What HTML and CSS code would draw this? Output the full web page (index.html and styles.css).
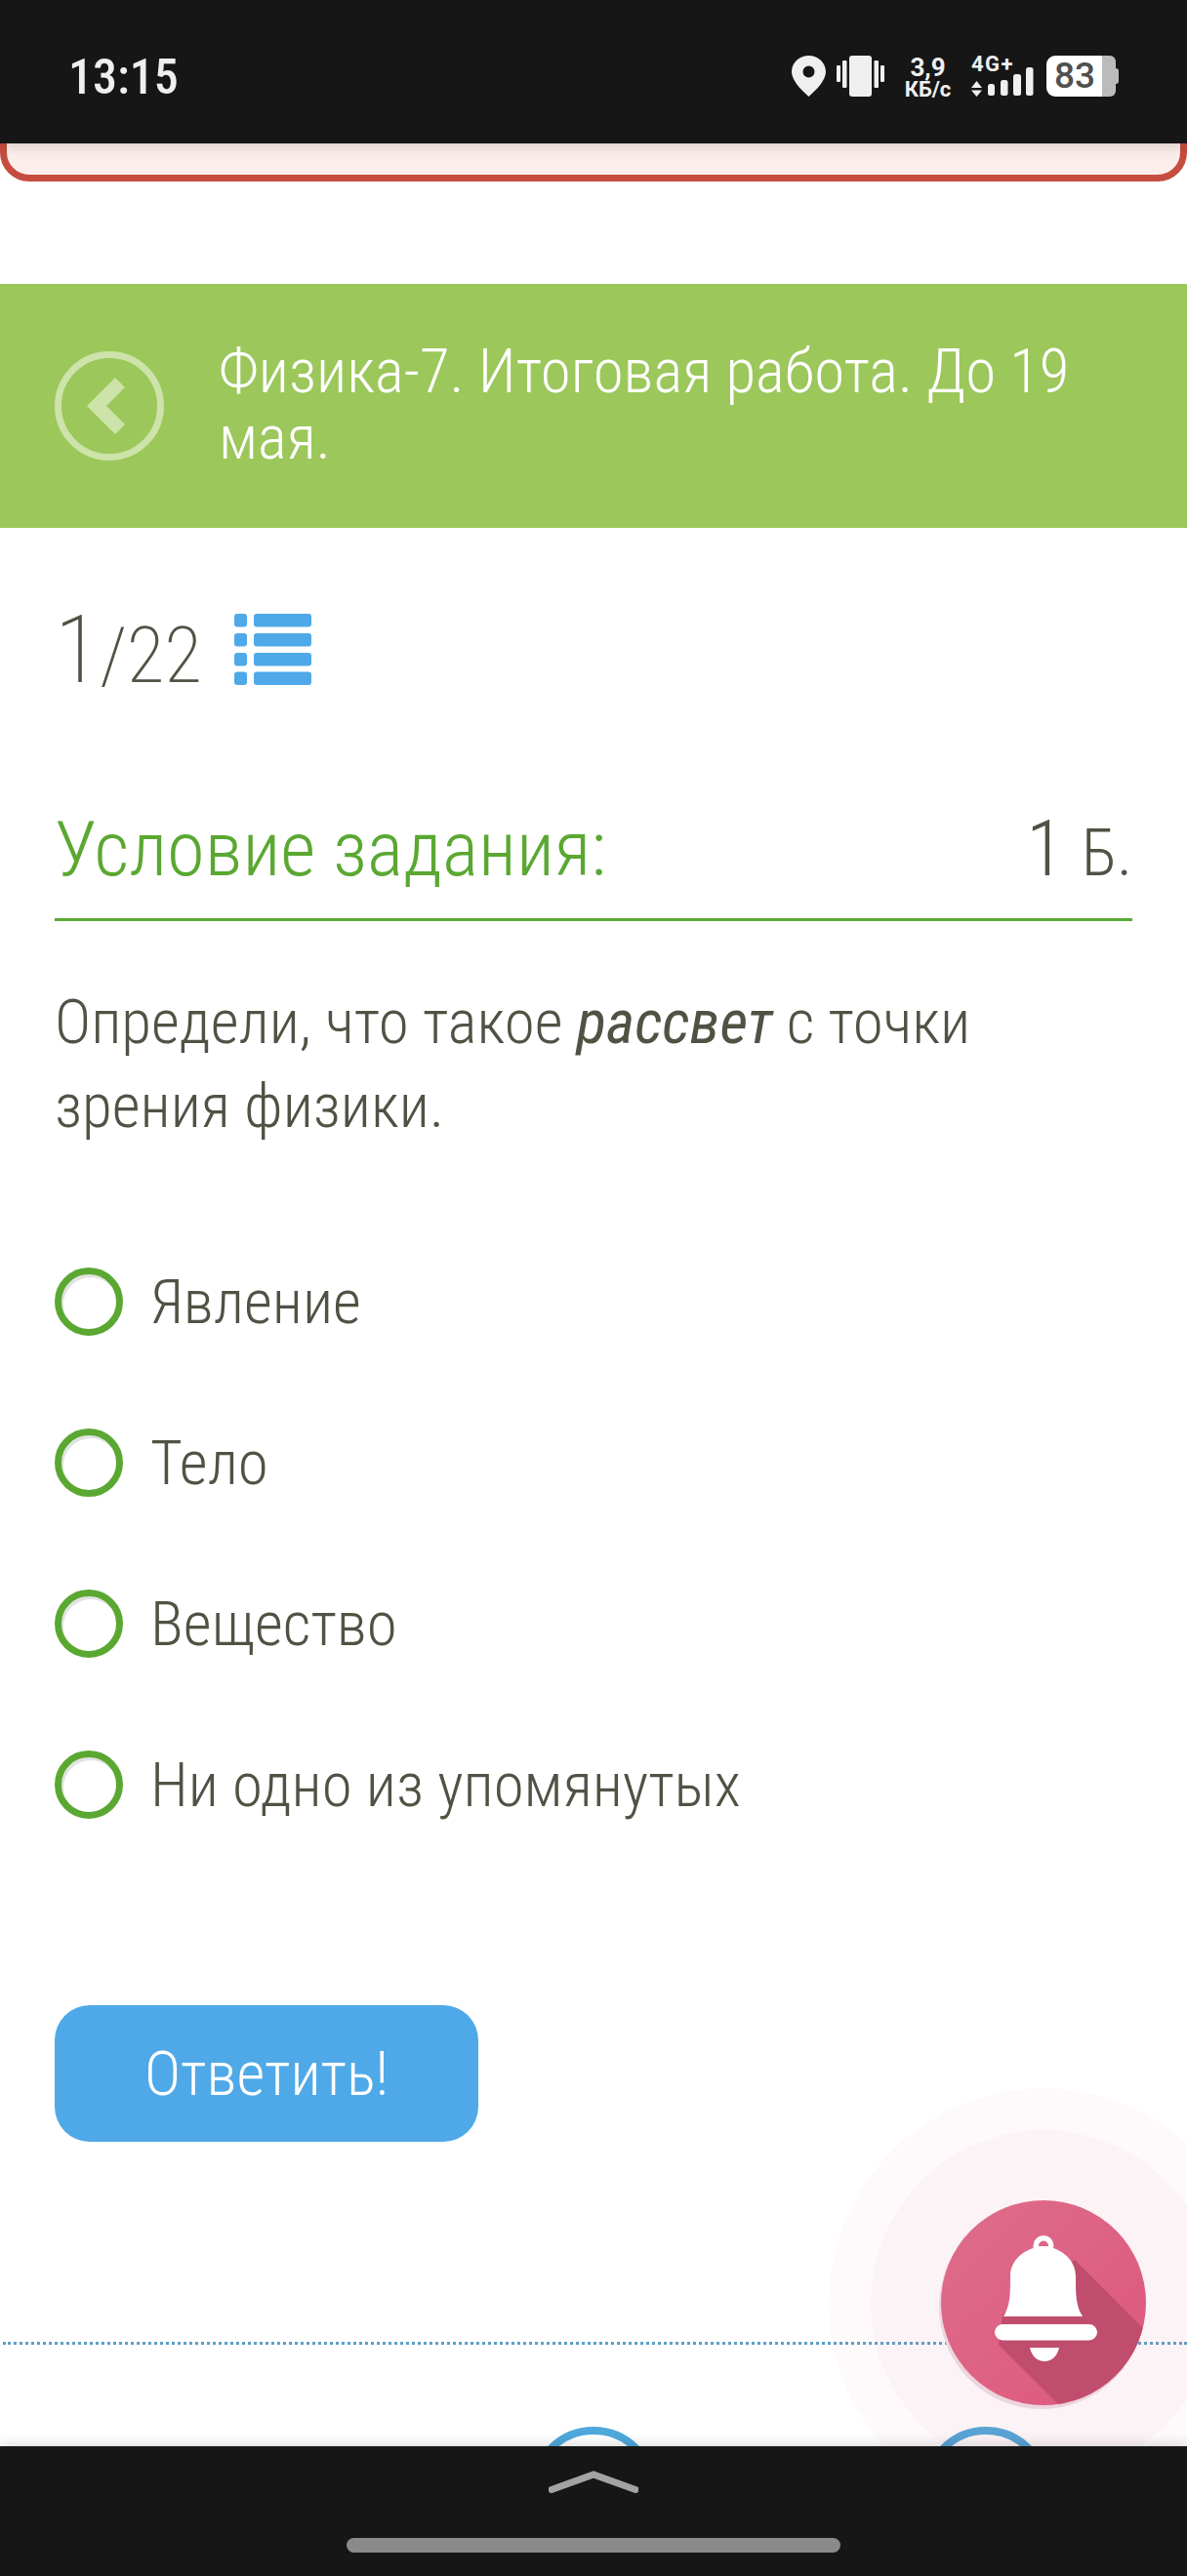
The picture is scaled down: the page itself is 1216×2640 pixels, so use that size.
FILE: index.html
```html
<!DOCTYPE html>
<html lang="ru">
<head>
<meta charset="utf-8">
<title>Физика-7</title>
<link rel="stylesheet" href="styles.css">
</head>
<body>
<div class="screen">
  <main class="page">
    <div class="alert"></div>
    <header class="banner">
      <div class="back">
        <svg class="back-chevron" viewBox="0 0 39 58"><path d="M29 0 L39 10 L20 29 L39 48 L29 58 L0 29 Z" fill="#cde3a9"/></svg>
      </div>
      <h1 class="banner-title">Физика-7. Итоговая работа. До 19 мая.</h1>
    </header>
    <div class="counter">
      <span class="counter-num"><span class="counter-first">1</span>/22</span>
      <svg class="list-icon" viewBox="0 0 79 73">
        <g fill="#4fa9e8">
          <rect x="0" y="0" width="13" height="13.5" rx="3"/><rect x="20" y="0" width="59" height="13.5" rx="3"/>
          <rect x="0" y="20" width="13" height="13.5" rx="3"/><rect x="20" y="20" width="59" height="13.5" rx="3"/>
          <rect x="0" y="40" width="13" height="13.5" rx="3"/><rect x="20" y="40" width="59" height="13.5" rx="3"/>
          <rect x="0" y="59.5" width="13" height="13.5" rx="3"/><rect x="20" y="59.5" width="59" height="13.5" rx="3"/>
        </g>
      </svg>
    </div>
    <div class="task-head">
      <h2 class="task-title">Условие задания:</h2>
      <div class="task-points">1 <small>Б.</small></div>
    </div>
    <p class="question">Определи, что такое <em>рассвет</em> с точки зрения физики.</p>
    <ul class="options">
      <li class="option"><span class="radio"></span>Явление</li>
      <li class="option"><span class="radio"></span>Тело</li>
      <li class="option"><span class="radio"></span>Вещество</li>
      <li class="option"><span class="radio"></span>Ни одно из упомянутых</li>
    </ul>
    <button class="submit">Ответить!</button>
    <div class="dotted"></div>
    <div class="next-row">
      <span class="ring"></span>
      <span class="ring"></span>
    </div>
  </main>

  <div class="status">
    <span class="time">13:15</span>
    <div class="status-icons">
      <svg class="pin" viewBox="0 0 35 42"><path fill-rule="evenodd" fill="#efefef" d="M17.5 0C27 0 35 7.300 35 16.500C35 25 26 34.500 17.500 42C9 34.500 0 25 0 16.500C0 7.300 8 0 17.500 0ZM17.500 10.500A6 6 0 1 0 17.500 22.500A6 6 0 1 0 17.500 10.500Z"/></svg>
      <svg class="vibrate" viewBox="0 0 49 42"><g fill="#efefef"><rect x="0" y="10" width="4" height="17" rx="1"/><rect x="6" y="5" width="4.500" height="28" rx="1"/><rect x="13" y="0" width="23" height="42" rx="3"/><rect x="38.500" y="5" width="4.500" height="28" rx="1"/><rect x="45" y="10" width="4" height="17" rx="1"/></g></svg>
      <div class="speed"><span class="speed-val">3,9</span><span class="speed-unit">КБ/с</span></div>
      <div class="net">
        <span class="net-type">4G+</span>
        <svg class="signal" viewBox="0 0 64 29"><g fill="#efefef"><path d="M0 21 L5.500 14 L11 21 Z M0 23.500 L11 23.500 L5.500 30 Z"/><rect x="17" y="17" width="7" height="12" rx="2.500"/><rect x="30" y="13" width="7.500" height="16" rx="2.500"/><rect x="43" y="7" width="8" height="22" rx="2.500"/><rect x="56" y="0" width="7.500" height="29" rx="2.500"/></g></svg>
      </div>
      <div class="battery"><span class="battery-level">83</span><span class="battery-empty"></span><span class="battery-nub"></span></div>
    </div>
  </div>

  <div class="bell-ripple-outer"></div>
  <div class="bell-ripple-inner"></div>
  <svg class="bell" viewBox="0 0 214 216">
    <defs>
      <linearGradient id="bellGrad" x1="0" y1="0" x2="1" y2="1"><stop offset="0" stop-color="#de6d8b"/><stop offset="1" stop-color="#dd577c"/></linearGradient>
      <clipPath id="bellClip"><circle cx="107" cy="105" r="105"/></clipPath>
    </defs>
    <circle cx="105" cy="109" r="105" fill="#ecd5de"/>
    <circle cx="107" cy="105" r="105" fill="url(#bellGrad)"/>
    <path clip-path="url(#bellClip)" fill="#c04d6d" d="M139 61 L230 152 L230 230 L130 217 L61 148 L65 117 Z"/>
    <g fill="#fff">
      <path fill-rule="evenodd" d="M107 36A10.500 10.500 0 0 1 117.500 46.500L117 49C129 53 140 63 140 78C140 96 140 108 147 119L66 119C73 108 73 96 73 78C73 63 84 53 96.500 49L96.500 46.500A10.500 10.500 0 0 1 107 36ZM107 41.500A5 5 0 0 0 102 47L112 47A5 5 0 0 0 107 41.500Z"/>
      <rect x="57" y="127" width="105" height="16.500" rx="8.250"/>
      <path d="M93 151 L123 151 C121 160 115 165 108 165 C101 165 95 160 93 151 Z"/>
    </g>
  </svg>

  <footer class="navbar">
    <svg class="nav-chevron" viewBox="0 0 92 23"><path d="M3 19.500 L46 4 L89 19.500" fill="none" stroke="#a3a3a3" stroke-width="7" stroke-linecap="round" stroke-linejoin="miter"/></svg>
    <div class="home-bar"></div>
  </footer>
</div>
</body>
</html>
```
FILE: styles.css
```css
* { box-sizing: border-box; }
html, body { margin: 0; padding: 0; background: #fff; }
.screen {
  position: relative;
  width: 1216px;
  height: 2640px;
  overflow: hidden;
  font-family: Roboto, "Liberation Sans", sans-serif;
  font-stretch: condensed;
  font-weight: 300;
  color: #515244;
}
.page { padding-top: 147px; }
.status {
  position: absolute;
  top: 0; left: 0; right: 0;
  height: 147px;
  background: #161616;
  box-shadow: 0 0 16px rgba(0,0,0,.22);
  display: flex;
  align-items: flex-start;
  justify-content: space-between;
  padding: 57px 70px 0 70px;
  color: #efefef;
}
.time { font-size: 50px; font-weight: 500; line-height: 44px; font-stretch: 80%; }
.status-icons { display: flex; align-items: flex-start; }
.pin { width: 35px; height: 42px; margin-right: 11px; }
.vibrate { width: 49px; height: 42px; margin-right: 20px; }
.speed { display: flex; flex-direction: column; align-items: center; font-weight: 700; width: 49px; margin-right: 20px; font-stretch: normal; }
.speed-val { font-size: 26px; line-height: 25px; }
.speed-unit { font-size: 22px; line-height: 19px; white-space: nowrap; }
.net { width: 64px; margin-right: 13px; position: relative; height: 42px; }
.net-type { font-size: 22px; font-weight: 700; line-height: 18px; letter-spacing: 1.500px; position: absolute; left: 0; top: 0; font-stretch: normal; }
.signal { width: 64px; height: 29px; position: absolute; left: 0; top: 12px; overflow: visible; }
.battery {
  position: relative;
  width: 74px; height: 42px;
}
.battery-level {
  position: absolute; left: 0; top: 0; bottom: 0; width: 58px;
  background: #fff;
  border-radius: 9px 0 0 9px;
  color: #505050;
  font-size: 37px;
  font-weight: 500;
  font-stretch: 90%;
  line-height: 42px;
  text-align: center;
}
.battery-empty { position: absolute; left: 57px; top: 0; bottom: 0; width: 14px; background: #bbb; border-radius: 0 6px 6px 0; }
.battery-nub { position: absolute; left: 71px; top: 13px; width: 3px; height: 16px; background: #bbb; border-radius: 0 3px 3px 0; }

.alert {
  height: 80px;
  margin-top: -41px;
  background: #fceeeb;
  border: 7px solid #c64c3f;
  border-radius: 0 0 30px 30px;
}
.banner {
  margin-top: 105px;
  height: 250px;
  background: #9bc75b;
  display: flex;
  align-items: center;
  padding-left: 56px;
  padding-right: 60px;
}
.back {
  flex: none;
  width: 112px; height: 112px;
  border: 7px solid #cde3a9;
  border-radius: 50%;
  display: flex;
  align-items: center;
  justify-content: center;
  margin-right: 56px;
}
.back-chevron { width: 39px; height: 58px; margin-right: 8px; }
.banner-title { margin: 0 0 2px; font-size: 63px; line-height: 68px; font-weight: 300; color: #fff; }

.counter { display: flex; align-items: flex-start; padding: 78px 56px 0; height: 278px; }
.counter-num { font-size: 80px; line-height: 94px; font-weight: 200; letter-spacing: -.3px; }
.counter-first { font-size: 96px; }
.list-icon { width: 79px; height: 73px; margin: 10px 0 0 33px; }

.task-head {
  margin: 0 56px;
  display: flex;
  justify-content: space-between;
  align-items: flex-start;
  height: 125px;
  padding-top: 6px;
  border-bottom: 3px solid #5aa832;
}
.task-title { margin: 0; font-size: 78.700px; font-weight: 300; color: #5aa832; line-height: 90px; }
.task-points { font-size: 80px; line-height: 90px; }
.task-points small { font-size: 66px; }
.question { margin: 61px 56px 0; font-size: 63px; line-height: 86px; }
.question em { font-weight: 400; font-style: italic; }

.options { list-style: none; margin: 107px 56px 0; padding: 0; display: flex; flex-direction: column; gap: 65px; }
.option { height: 100px; display: flex; align-items: center; font-size: 63px; }
.radio {
  flex: none;
  width: 70px; height: 70px;
  border: 7px solid #5aa832;
  border-radius: 50%;
  box-shadow: inset 2px 3px 0 #e2e2e2;
  margin-right: 28px;
}
.submit {
  display: block;
  margin: 176px 0 0 56px;
  width: 434px; height: 140px;
  background: #4fa9e8;
  border: 0;
  border-radius: 36px;
  font: inherit;
  font-size: 63px;
  color: #fff;
}
.dotted { margin: 205px 0 0 3px; border-top: 3px dotted #5b9fc9; }

.next-row { display: flex; gap: 272px; padding-left: 543px; margin-top: 84px; }
.ring { width: 130px; height: 130px; border: 8px solid #4fa8dc; border-radius: 50%; flex: none; }

.bell-ripple-outer { position: absolute; left: 849px; top: 2140px; width: 440px; height: 440px; border-radius: 50%; background: rgba(222,109,139,.035); }
.bell-ripple-inner { position: absolute; left: 892px; top: 2183px; width: 354px; height: 354px; border-radius: 50%; background: rgba(190,110,140,.05); }
.bell { position: absolute; left: 962px; top: 2255px; width: 214px; height: 216px; }

.navbar {
  position: absolute;
  left: 0; right: 0; bottom: 0;
  height: 133px;
  background: #161616;
  box-shadow: 0 0 14px rgba(0,0,0,.2);
  display: flex;
  flex-direction: column;
  align-items: center;
}
.nav-chevron { width: 92px; height: 23px; margin-top: 25px; }
.home-bar { width: 506px; height: 15px; background: #8a8a8a; border-radius: 8px; margin-top: 46px; }
```
